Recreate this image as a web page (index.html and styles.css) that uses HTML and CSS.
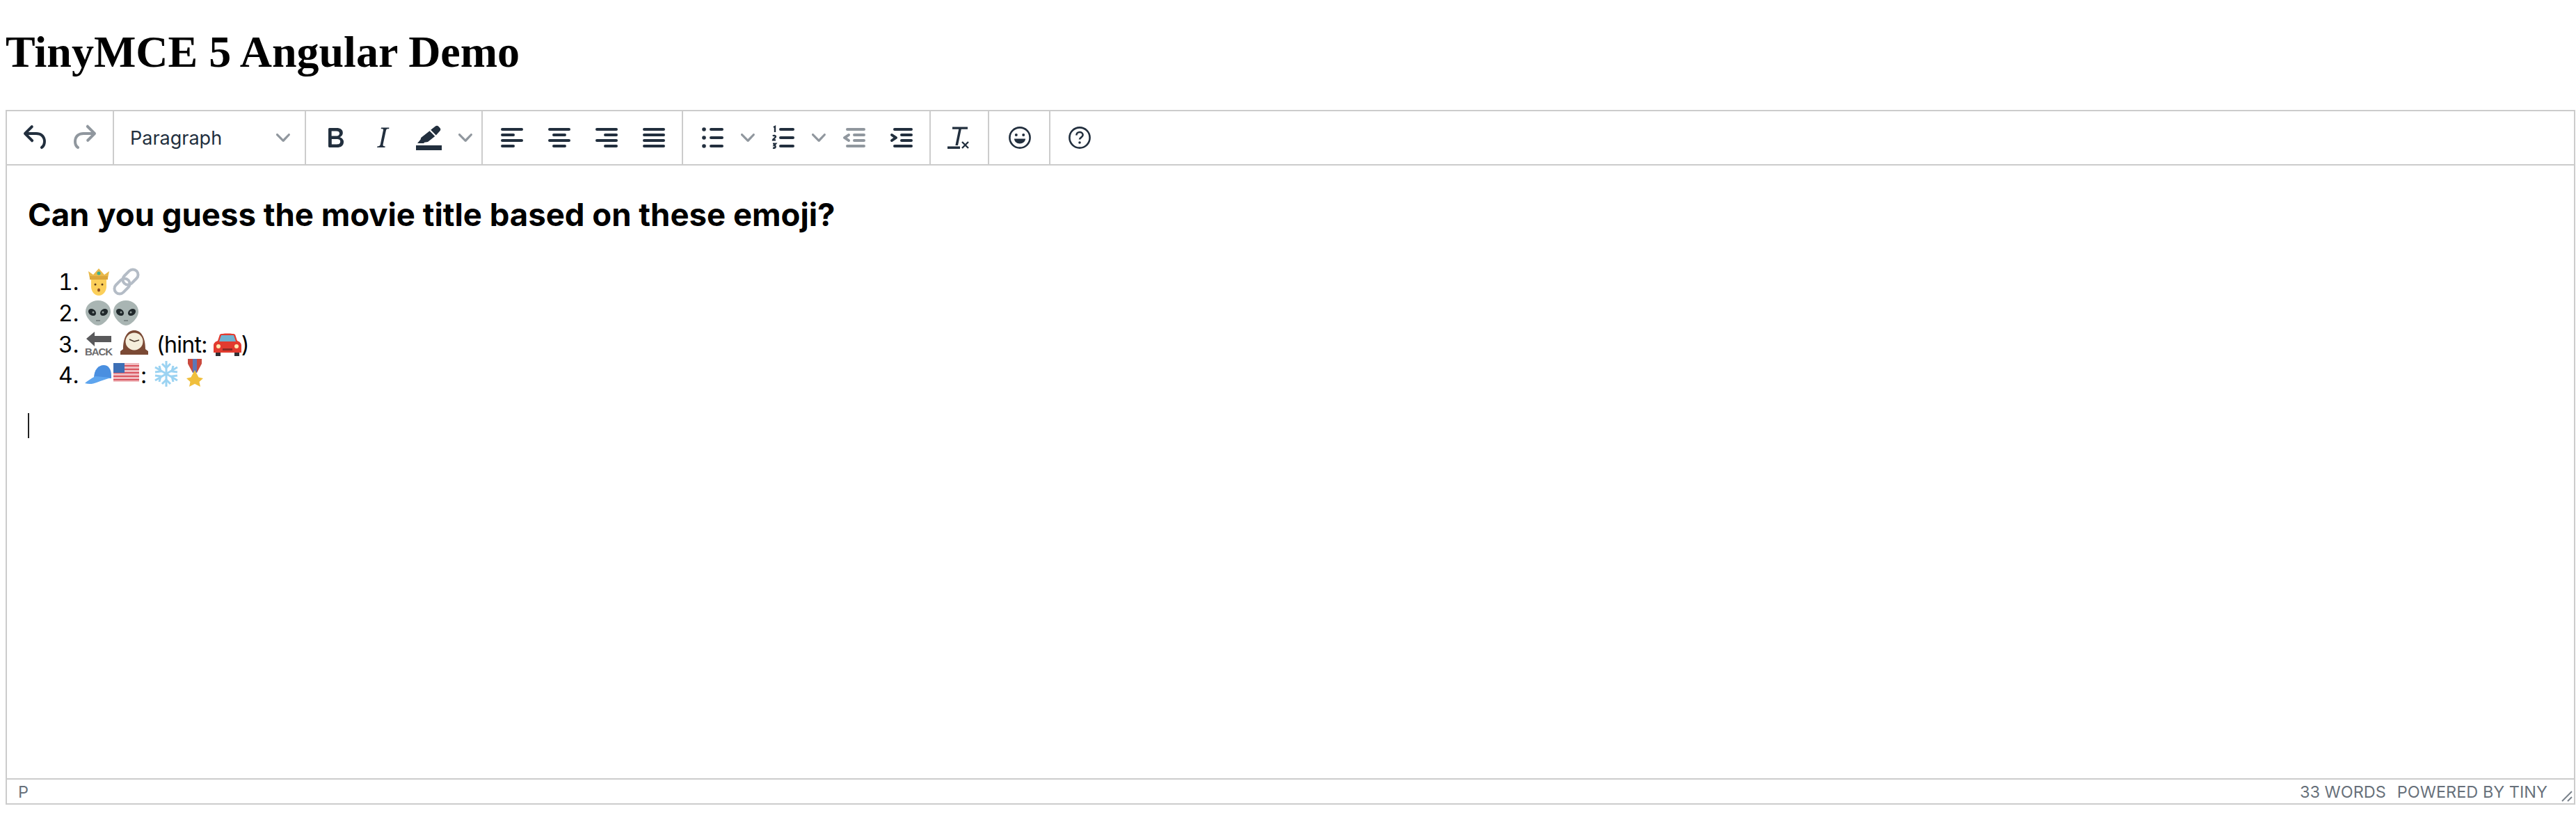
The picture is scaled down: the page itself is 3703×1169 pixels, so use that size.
FILE: index.html
```html
<!DOCTYPE html>
<html lang="en">
<head>
    <meta charset="UTF-8">
    <title>TinyMCE 5 Angular Demo</title>
    <link rel="stylesheet" href="styles.css">
</head>
<body>
    <svg class="defs" width="0" height="0">
        <symbol id="chevron" viewBox="0 0 10 10">
            <path d="M8.7 2.2c.3-.3.8-.3 1 0 .4.4.4.9 0 1.2L5.700 7.800c-.3.3-.9.3-1.200 0L.2 3.400a.8.8 0 0 1 0-1.200c.3-.3.8-.3 1.100 0L5 6l3.700-3.800z"/>
        </symbol>
    </svg>

    <h1>TinyMCE 5 Angular Demo</h1>

    <div class="editor">
        <!-- Toolbar -->
        <div class="toolbar">
            <div class="group">
                <button class="btn"><svg class="icon" viewBox="0 0 24 24"><path d="M6.4 8H12c3.7 0 6.2 2 6.8 5.1.6 2.7-.4 5.6-2.3 6.8a1 1 0 0 1-1-1.8c1.1-.6 1.8-2.7 1.4-4.6-.5-2.1-2.1-3.5-4.9-3.5H6.4l3.3 3.3a1 1 0 1 1-1.4 1.4l-5-5a1 1 0 0 1 0-1.4l5-5a1 1 0 0 1 1.4 1.4L6.4 8z"/></svg></button>
                <button class="btn disabled"><svg class="icon" viewBox="0 0 24 24"><path d="M17.6 10H12c-2.8 0-4.4 1.4-4.9 3.5-.4 2 .3 4 1.4 4.6a1 1 0 1 1-1 1.8c-2-1.2-2.9-4.1-2.3-6.8.6-3 3-5.1 6.8-5.1h5.6l-3.3-3.3a1 1 0 1 1 1.4-1.4l5 5a1 1 0 0 1 0 1.4l-5 5a1 1 0 0 1-1.4-1.4l3.3-3.3z"/></svg></button>
            </div>
            <div class="group">
                <button class="select">
                    <span>Paragraph</span>
                    <svg class="chevron"><use href="#chevron"/></svg>
                </button>
            </div>
            <div class="group">
                <button class="btn"><svg class="icon" viewBox="0 0 24 24"><path d="M7.8 19c-.3 0-.5 0-.6-.2l-.2-.5V5.700c0-.2 0-.4.2-.5l.6-.2h5c1.500 0 2.700.3 3.500 1 .7.6 1.100 1.400 1.100 2.500a3 3 0 0 1-.6 1.900c-.4.6-1 1-1.600 1.200.4.1.9.3 1.300.6s.8.7 1 1.200c.4.4.5 1 .5 1.600 0 1.300-.4 2.300-1.300 3-.8.7-2.100 1-3.800 1H7.800zm5-8.300c.6 0 1.200-.1 1.600-.5.4-.3.6-.7.6-1.300 0-1.100-.8-1.700-2.300-1.700H9.300v3.500h3.400zm.5 6c.7 0 1.300-.1 1.700-.4.4-.4.6-.9.6-1.500s-.2-1-.7-1.400c-.4-.3-1-.4-2-.4H9.400v3.800h4z"/></svg></button>
                <button class="btn"><svg class="icon" viewBox="0 0 24 24"><path d="M16.700 4.700l-.1.9h-.3c-.6 0-1 0-1.400.3-.3.3-.4.6-.5 1.100l-2.100 9.800v.6c0 .5.4.8 1.400.8h.2l-.2.8H8l.2-.8h.2c1.100 0 1.800-.5 2-1.500l2-9.800.1-.5c0-.6-.4-.8-1.400-.8h-.3l.2-.9h5.800z"/></svg></button>
                <button class="btn"><svg class="icon" viewBox="0 0 24 24"><path d="M2 17.500h18.500V21H2z"/><path d="M12.600 6.400l3.200-2.500a1.900 1.900 0 0 1 2.500.1l.7.7a1.900 1.900 0 0 1 .1 2.600l-2.700 2.900z"/><path d="M11.800 7.100l3.800 3.900-5.100 4-2.500.4-.4.600H3l2.300-2.700.3-1.300z"/></svg></button>
                <button class="caret"><svg class="chevron"><use href="#chevron"/></svg></button>
            </div>
            <div class="group">
                <button class="btn"><svg class="icon" viewBox="0 0 24 24"><path d="M5 5h14a1 1 0 0 1 0 2H5a1 1 0 1 1 0-2zm0 4h8a1 1 0 0 1 0 2H5a1 1 0 1 1 0-2zm0 8h8a1 1 0 0 1 0 2H5a1 1 0 0 1 0-2zm0-4h14a1 1 0 0 1 0 2H5a1 1 0 0 1 0-2z"/></svg></button>
                <button class="btn"><svg class="icon" viewBox="0 0 24 24"><path d="M5 5h14a1 1 0 0 1 0 2H5a1 1 0 1 1 0-2zm3 4h8a1 1 0 0 1 0 2H8a1 1 0 1 1 0-2zm0 8h8a1 1 0 0 1 0 2H8a1 1 0 0 1 0-2zm-3-4h14a1 1 0 0 1 0 2H5a1 1 0 0 1 0-2z"/></svg></button>
                <button class="btn"><svg class="icon" viewBox="0 0 24 24"><path d="M5 5h14a1 1 0 0 1 0 2H5a1 1 0 1 1 0-2zm6 4h8a1 1 0 0 1 0 2h-8a1 1 0 0 1 0-2zm0 8h8a1 1 0 0 1 0 2h-8a1 1 0 0 1 0-2zm-6-4h14a1 1 0 0 1 0 2H5a1 1 0 0 1 0-2z"/></svg></button>
                <button class="btn"><svg class="icon" viewBox="0 0 24 24"><path d="M5 5h14a1 1 0 0 1 0 2H5a1 1 0 1 1 0-2zm0 4h14a1 1 0 0 1 0 2H5a1 1 0 1 1 0-2zm0 4h14a1 1 0 0 1 0 2H5a1 1 0 0 1 0-2zm0 4h14a1 1 0 0 1 0 2H5a1 1 0 0 1 0-2z"/></svg></button>
            </div>
            <div class="group">
                <button class="btn"><svg class="icon" viewBox="0 0 24 24"><path d="M11 5h8a1 1 0 0 1 0 2h-8a1 1 0 0 1 0-2zm0 6h8a1 1 0 0 1 0 2h-8a1 1 0 0 1 0-2zm0 6h8a1 1 0 0 1 0 2h-8a1 1 0 0 1 0-2z"/><circle cx="6" cy="6" r="1.400"/><circle cx="6" cy="12" r="1.400"/><circle cx="6" cy="18" r="1.400"/></svg></button>
                <button class="caret"><svg class="chevron"><use href="#chevron"/></svg></button>
                <button class="btn"><svg class="icon" viewBox="0 0 24 24"><path d="M10 5h9a1 1 0 0 1 0 2h-9a1 1 0 0 1 0-2zm0 6h9a1 1 0 0 1 0 2h-9a1 1 0 0 1 0-2zm0 6h9a1 1 0 0 1 0 2h-9a1 1 0 0 1 0-2z"/><path class="digits" d="M5 4.500l1-.5v4M4.500 10.800c.6-.6 2-.4 2 .5 0 .8-2 1.500-2 2.400h2M4.500 16.300h2l-1 1.200c1.200 0 1.300 2.200-1 1.900"/></svg></button>
                <button class="caret"><svg class="chevron"><use href="#chevron"/></svg></button>
                <button class="btn disabled"><svg class="icon" viewBox="0 0 24 24"><path d="M7 5h12a1 1 0 0 1 0 2H7a1 1 0 1 1 0-2zm5 4h7a1 1 0 0 1 0 2h-7a1 1 0 0 1 0-2zm0 4h7a1 1 0 0 1 0 2h-7a1 1 0 0 1 0-2zm-5 4h12a1 1 0 0 1 0 2H7a1 1 0 0 1 0-2zm1.600-3.800a1 1 0 0 1-1.200 1.600l-3-2a1 1 0 0 1 0-1.600l3-2a1 1 0 0 1 1.200 1.600L6.800 12l1.800 1.200z"/></svg></button>
                <button class="btn"><svg class="icon" viewBox="0 0 24 24"><path d="M7 5h12a1 1 0 0 1 0 2H7a1 1 0 1 1 0-2zm5 4h7a1 1 0 0 1 0 2h-7a1 1 0 0 1 0-2zm0 4h7a1 1 0 0 1 0 2h-7a1 1 0 0 1 0-2zm-5 4h12a1 1 0 0 1 0 2H7a1 1 0 0 1 0-2zm-2.600-3.800L6.200 12l-1.800-1.200a1 1 0 0 1 1.200-1.600l3 2a1 1 0 0 1 0 1.600l-3 2a1 1 0 1 1-1.200-1.600z"/></svg></button>
            </div>
            <div class="group">
                <button class="btn"><svg class="icon" viewBox="0 0 24 24"><path d="M6.500 4.200h11v1.700h-4.600l-2.400 11.600H8.700l2.400-11.600H6.500zM3 18.300h9V20H3z"/><path class="digits" d="M13.500 15l4.500 4.500M18 15l-4.500 4.500"/></svg></button>
            </div>
            <div class="group wide">
                <button class="btn"><svg class="icon" viewBox="0 0 24 24"><circle class="ring" cx="12" cy="12" r="7.300"/><circle cx="9.400" cy="10" r="1"/><circle cx="14.600" cy="10" r="1"/><path d="M8 12.800h8c0 2-1.800 3.500-4 3.500s-4-1.500-4-3.500z"/></svg></button>
            </div>
            <div class="group">
                <button class="btn"><svg class="icon" viewBox="0 0 24 24"><circle class="ring" cx="12" cy="12" r="7.300"/><path class="ring" d="M9.700 10.300c0-1.400 1-2.300 2.300-2.300s2.300.9 2.300 2c0 1.800-2.300 1.800-2.300 3.300"/><circle cx="12" cy="15.500" r=".9"/></svg></button>
            </div>
        </div>

        <!-- Edit area -->
        <div class="content">
            <h2>Can you guess the movie title based on these emoji?</h2>
            <ol>
                <li>
                    <svg class="emoji" viewBox="0 0 40 40"><path d="M7 15L5 5l7 5 8-9 8 9 7-5-2 10z" fill="#e9b949"/><circle cx="20" cy="8" r="2.500" fill="#3fae8c"/><path d="M9 15h22v12c0 7-5 13-11 13S9 34 9 27z" fill="#fbcf5a"/><path d="M7 12h26v5H7z" fill="#dca63a"/><circle cx="15" cy="24" r="1.500" fill="#5a3b1e"/><circle cx="25" cy="24" r="1.500" fill="#5a3b1e"/><ellipse cx="20" cy="32" rx="2" ry="2.500" fill="#8a4b24"/></svg><svg class="emoji" viewBox="0 0 40 40"><g fill="none" stroke="#b4bcc6" stroke-width="4"><rect x="18" y="1" width="15" height="25" rx="7.500" transform="rotate(45 25.500 13.500)"/><rect x="6" y="14" width="15" height="25" rx="7.500" transform="rotate(45 13.500 26.500)"/></g></svg>
                </li>
                <li>
                    <svg class="emoji" viewBox="0 0 40 40"><path d="M19 2C9 2 1 9 1 18c0 9 11 20 18 20s18-11 18-20C37 9 29 2 19 2z" fill="#a9b5b3"/><ellipse cx="10.500" cy="19" rx="6" ry="4.500" fill="#20282b" transform="rotate(35 10.500 19)"/><ellipse cx="27.500" cy="19" rx="6" ry="4.500" fill="#20282b" transform="rotate(-35 27.500 19)"/><circle cx="12" cy="19" r="1.500" fill="#8f9a98"/><circle cx="26" cy="19" r="1.500" fill="#8f9a98"/><path d="M16 31h6" stroke="#6f7a78" stroke-width="1.500"/></svg><svg class="emoji" viewBox="0 0 40 40"><path d="M19 2C9 2 1 9 1 18c0 9 11 20 18 20s18-11 18-20C37 9 29 2 19 2z" fill="#a9b5b3"/><ellipse cx="10.500" cy="19" rx="6" ry="4.500" fill="#20282b" transform="rotate(35 10.500 19)"/><ellipse cx="27.500" cy="19" rx="6" ry="4.500" fill="#20282b" transform="rotate(-35 27.500 19)"/><circle cx="12" cy="19" r="1.500" fill="#8f9a98"/><circle cx="26" cy="19" r="1.500" fill="#8f9a98"/><path d="M16 31h6" stroke="#6f7a78" stroke-width="1.500"/></svg>
                </li>
                <li>
                    <svg class="emoji" viewBox="0 0 40 40"><path d="M2 12L14 2v6h24v9H14v6z" fill="#59595b"/><text class="back" x="0" y="36" textLength="40">BACK</text></svg> <svg class="emoji" viewBox="0 0 40 40"><path d="M2 35v-5l4-3C6 10 12 0 22 0s16 10 16 27l4 3v5z" fill="#7b4a35"/><circle cx="22" cy="16" r="12.500" fill="#f5eedb"/><path d="M22 16l-7-3M22 16l7-2" stroke="#4c3a2c" stroke-width="1.500"/></svg> <span class="hint">(hint:</span> <svg class="emoji" viewBox="0 0 40 40"><path d="M3 37v-8h7v8zM30 37v-8h7v8z" fill="#2f2f33"/><path d="M9 6C11 4 29 4 31 6l3 9c3 1 6 3 6 7v10H0V22c0-4 3-6 6-7z" fill="#e23b2f"/><path d="M11 7h18l3 9H8z" fill="#6fb2d0"/><circle cx="7" cy="23" r="3" fill="#ffe9b0"/><circle cx="33" cy="23" r="3" fill="#ffe9b0"/><path d="M13 26h14v3H13z" fill="#8b2a24"/></svg>)
                </li>
                <li>
                    <svg class="emoji" viewBox="0 0 40 40"><path d="M13 25C13 12 20 6 27 6c7 0 11 6 11 15v4z" fill="#4a8fe0"/><path d="M15 22C8 26 3 29 0 32c6 2 12 1 17-1 7-3 14-5 21-7z" fill="#5ea5ee"/></svg><svg class="emoji" viewBox="0 0 40 40"><rect x="1" y="3" width="37" height="27" fill="#f0bcc0"/><path d="M1 7h37M1 12h37M1 17h37M1 22h37M1 27h37" stroke="#d9555f" stroke-width="2"/><rect x="1" y="3" width="16" height="14" fill="#3d6fb5"/></svg>: <svg class="emoji" viewBox="0 0 40 40"><g fill="none" stroke="#9bd3f2" stroke-width="3"><path d="M19 0v37M3 9l32 19M3 28L35 9"/><path d="M13 4l6 6 6-6M13 33l6-6 6 6M3 16l8-1-2-8M35 16l-8-1 2-8M3 21l8 1-2 8M35 21l-8 1 2 8"/></g></svg><svg class="emoji" viewBox="0 0 40 40"><path d="M10-3h20v7L23 17h-6L10 4z" fill="#c94a3f"/><path d="M17-3h6v20h-6z" fill="#5c77b8"/><path d="M20 13l5.500 10.500L32 25l-5.500 5 1.500 7-8-4-8 4 1.500-7L8 25l6.500-1.500z" fill="#f0bf3c"/></svg>
                </li>
            </ol>
            <p class="cursor-line"><span class="cursor"></span></p>
        </div>

        <!-- Status bar -->
        <div class="statusbar">
            <span class="path">p</span>
            <span class="words">33 words</span>
            <span class="branding">Powered by Tiny</span>
            <svg class="resize" viewBox="0 0 16 16"><path d="M1 15L15 1M9 15l6-6" fill="none" stroke="#222f3e" stroke-opacity=".6" stroke-width="2"/></svg>
        </div>
    </div>
</body>
</html>
```

FILE: styles.css
```css
/* General Styles */
html, body {
    height: 100%;
}

body {
    margin: 0;
    padding: 0 1px 0 8px;
    overflow: hidden;
    background-color: #fff;
    color: #000;
}

.defs {
    position: absolute;
}

h1 {
    margin: 0;
    height: 158px;
    padding-top: 39px;
    box-sizing: border-box;
    font-family: "Liberation Serif", serif;
    font-size: 64px;
    line-height: 72px;
    font-weight: bold;
}

/* Editor frame */
.editor {
    display: flex;
    flex-direction: column;
    height: 999px;
    box-sizing: border-box;
    border: 2px solid #ccc;
}

.toolbar {
    display: flex;
    flex: none;
    height: 76px;
    border-bottom: 2px solid #ccc;
    box-sizing: content-box;
}

.group {
    display: flex;
    padding: 4px 6px 4px 8px;
    border-left: 2px solid #ccc;
}

.group:first-child {
    padding-right: 8px;
    border-left: none;
}

.group.wide {
    padding-left: 10px;
    padding-right: 8px;
}

.btn,
.caret,
.select {
    display: flex;
    align-items: center;
    justify-content: center;
    height: 68px;
    padding: 0;
    border: none;
    background: none;
    font-family: Inter, sans-serif;
    color: #222f3e;
}

.btn {
    width: 68px;
}

.caret {
    width: 34px;
}

.select {
    width: 260px;
    justify-content: space-between;
    padding: 0 15px 0 15px;
    font-size: 27px;
}

.icon {
    width: 48px;
    height: 48px;
    fill: #222f3e;
}

.disabled .icon {
    fill: rgba(34, 47, 62, 0.5);
}

.digits {
    fill: none;
    stroke: #222f3e;
    stroke-width: 1.2;
}

.ring {
    fill: none;
    stroke: #222f3e;
    stroke-width: 1.3;
}

.chevron {
    width: 20px;
    height: 20px;
    fill: rgba(34, 47, 62, 0.5);
}

/* Edit area */
.content {
    flex: 1;
    padding: 0 30px;
    font-family: Inter, sans-serif;
    font-size: 32px;
    line-height: 44.8px;
}

.content h2 {
    margin: 39px 0 43px 0;
    font-size: 45.5px;
    line-height: 64px;
    font-weight: bold;
}

.content ol {
    margin: 0;
    padding-left: 82px;
}

.emoji {
    width: 40px;
    height: 40px;
    vertical-align: -8px;
    overflow: visible;
}

.hint {
    margin-left: 5px;
    letter-spacing: -0.7px;
}

.back {
    font-family: "Liberation Sans", sans-serif;
    font-size: 15px;
    font-weight: bold;
    fill: #6b6b6d;
}

.cursor-line {
    margin: 27px 0 0 0;
    height: 44.8px;
}

.cursor {
    display: inline-block;
    width: 2px;
    height: 36px;
    background-color: #222;
    vertical-align: -7px;
}

/* Status bar */
.statusbar {
    display: flex;
    flex: none;
    align-items: center;
    height: 34px;
    padding-left: 16px;
    border-top: 2px solid #ccc;
    font-family: Inter, sans-serif;
    font-size: 23.5px;
    text-transform: uppercase;
    color: rgba(34, 47, 62, 0.7);
}

.path {
    margin-right: auto;
}

.branding {
    margin-left: 16px;
}

.resize {
    width: 16px;
    height: 16px;
    margin: 14px 2px 0 20px;
}
```
